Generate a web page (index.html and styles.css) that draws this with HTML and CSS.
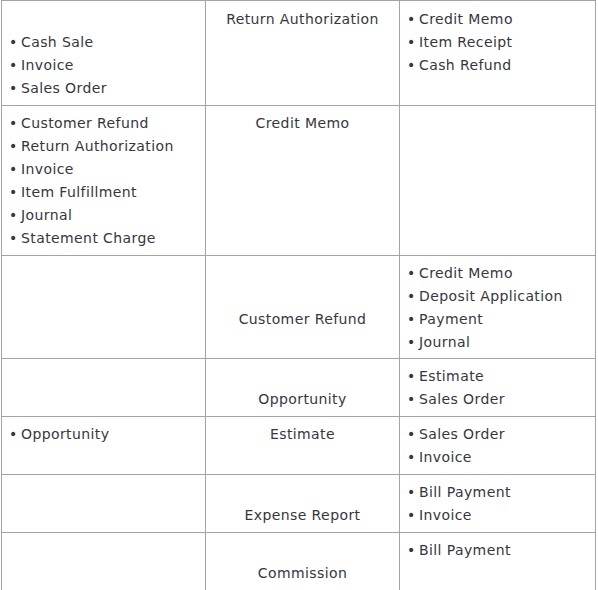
FILE: index.html
```html
<!DOCTYPE html>
<html lang="en">
<head>
<meta charset="utf-8">
<title>Transactions</title>
<link rel="stylesheet" href="styles.css">
</head>
<body>
<div class="grid">
  <div class="cell top"><ul class="list skip1"><li>Cash Sale</li><li>Invoice</li><li>Sales Order</li></ul></div>
  <div class="cell top mid"><div>Return Authorization</div></div>
  <div class="cell top"><ul class="list"><li>Credit Memo</li><li>Item Receipt</li><li>Cash Refund</li></ul></div>

  <div class="cell"><ul class="list"><li>Customer Refund</li><li>Return Authorization</li><li>Invoice</li><li>Item Fulfillment</li><li>Journal</li><li>Statement Charge</li></ul></div>
  <div class="cell mid"><div>Credit Memo</div></div>
  <div class="cell"></div>

  <div class="cell"></div>
  <div class="cell mid"><div class="skip2">Customer Refund</div></div>
  <div class="cell tight"><ul class="list"><li>Credit Memo</li><li>Deposit Application</li><li>Payment</li><li>Journal</li></ul></div>

  <div class="cell"></div>
  <div class="cell mid"><div class="skip1">Opportunity</div></div>
  <div class="cell"><ul class="list"><li>Estimate</li><li>Sales Order</li></ul></div>

  <div class="cell"><ul class="list"><li>Opportunity</li></ul></div>
  <div class="cell mid"><div>Estimate</div></div>
  <div class="cell"><ul class="list"><li>Sales Order</li><li>Invoice</li></ul></div>

  <div class="cell"></div>
  <div class="cell mid"><div class="skip1">Expense Report</div></div>
  <div class="cell"><ul class="list"><li>Bill Payment</li><li>Invoice</li></ul></div>

  <div class="cell"></div>
  <div class="cell mid"><div class="skip1">Commission</div></div>
  <div class="cell"><ul class="list"><li>Bill Payment</li></ul></div>
</div>
</body>
</html>
```

FILE: styles.css
```css
html, body {
  margin: 0;
  padding: 0;
  background: #ffffff;
}

body {
  font-family: "DejaVu Sans", Verdana, sans-serif;
  font-size: 14px;
  line-height: 23px;
  letter-spacing: 0.4px;
  color: #363640;
  padding-left: 1px;
}

.grid {
  display: grid;
  grid-template-columns: 203px 193px 195px;
  gap: 1px;
  padding: 1px;
  background: #a4a4a4;
  width: 595px;
  box-sizing: border-box;
}

.cell {
  background: #ffffff;
  padding: 6px 6px 5px 6px;
  min-height: 23px;
}

.cell.top {
  padding-top: 7px;
}

.cell.tight {
  padding-bottom: 4px;
}

.mid {
  text-align: center;
}

.list {
  list-style: none;
  margin: 0;
  padding: 0;
}

.list li {
  display: flex;
}

.list li::before {
  content: "\2022";
  width: 12px;
  flex: none;
  padding-left: 1px;
}

.skip1 {
  padding-top: 23px;
}

.skip2 {
  padding-top: 46px;
}
```
